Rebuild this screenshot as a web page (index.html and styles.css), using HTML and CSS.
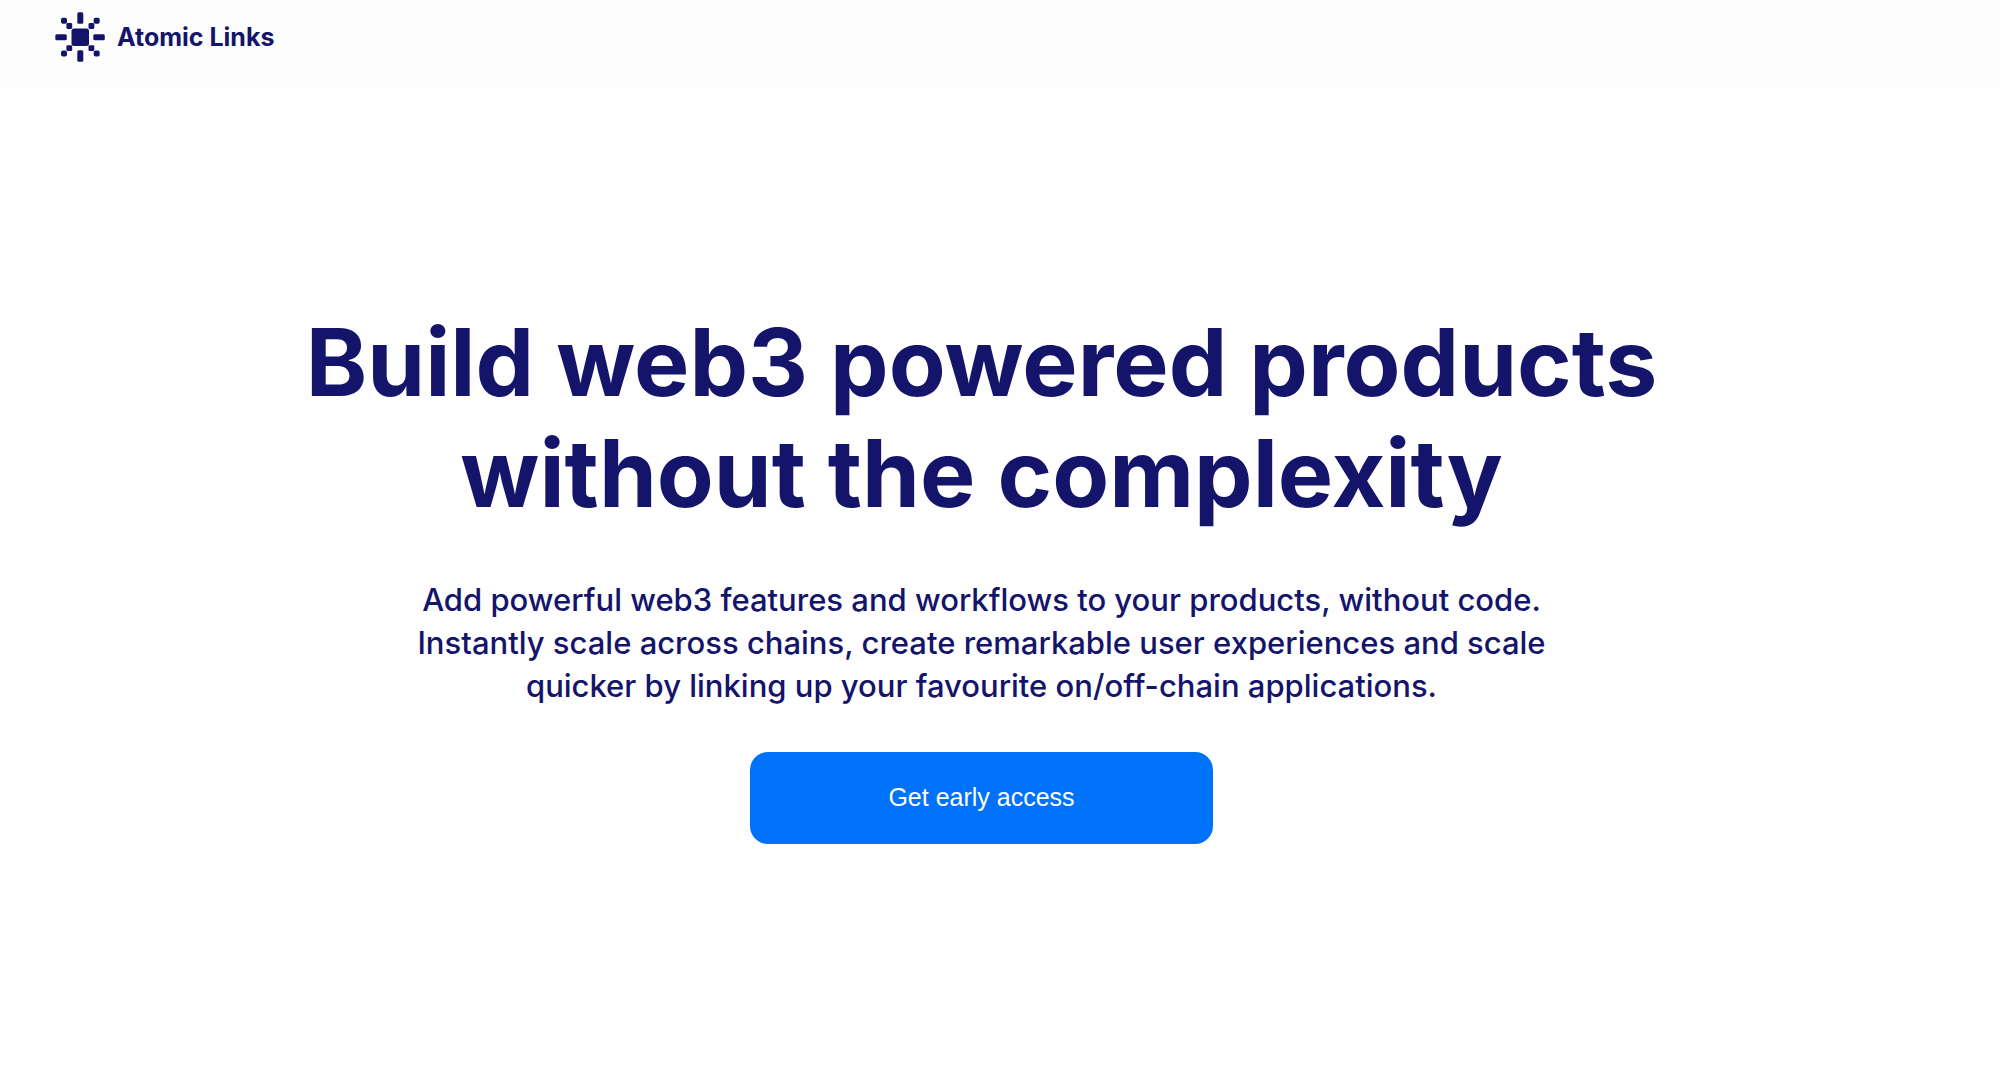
FILE: index.html
```html
<!DOCTYPE html>
<html lang="en">
<head>
<meta charset="utf-8">
<meta name="viewport" content="width=device-width, initial-scale=1">
<title>Atomic Links</title>
<link rel="stylesheet" href="styles.css">
</head>
<body>
<header class="site-header">
  <a class="brand" href="#">
    <svg class="brand-mark" viewBox="0 0 50 50" fill="currentColor" aria-hidden="true">
      <rect x="16.500" y="16.500" width="17.500" height="17.500" rx="2.500"/>
      <rect x="22.300" y="0.300" width="6" height="11.500" rx="1.500"/>
      <rect x="22.300" y="38.300" width="6" height="11.500" rx="1.500"/>
      <rect x="0.300" y="22.200" width="11.500" height="6" rx="1.500"/>
      <rect x="38.300" y="22.200" width="11.500" height="6" rx="1.500"/>
      <rect x="6" y="5.700" width="6" height="6" rx="1.800"/>
      <rect x="11.400" y="11.100" width="5.800" height="5.800" rx="1.300"/>
      <rect x="38.700" y="5.700" width="6" height="6" rx="1.800"/>
      <rect x="33.500" y="11.100" width="5.800" height="5.800" rx="1.300"/>
      <rect x="6" y="38.600" width="6" height="6" rx="1.800"/>
      <rect x="11.400" y="33.300" width="5.800" height="5.800" rx="1.300"/>
      <rect x="38.700" y="38.600" width="6" height="6" rx="1.800"/>
      <rect x="33.500" y="33.300" width="5.800" height="5.800" rx="1.300"/>
    </svg>
    <span>Atomic Links</span>
  </a>
</header>
<main class="hero">
  <h1 class="hero-title">Build web3 powered products without the complexity</h1>
  <p class="hero-text">Add powerful web3 features and workflows to your products, without code. Instantly scale across chains, create remarkable user experiences and scale quicker by linking up your favourite on/off-chain applications.</p>
  <button class="cta" type="button">Get early access</button>
</main>
</body>
</html>
```
FILE: styles.css
```css
* {
  box-sizing: border-box;
}

body {
  display: flex;
  flex-direction: column;
  min-height: 100vh;
  margin: 0;
  background: #fefefe;
  color: #14146b;
  font-family: Inter, "Liberation Sans", sans-serif;
}

.site-header {
  display: flex;
  padding: 12px 55px 19px;
  background: #fdfdfd;
}

.brand {
  display: flex;
  align-items: center;
  gap: 12px;
  color: inherit;
  font-size: 25px;
  font-weight: 700;
  line-height: 48px;
  text-decoration: none;
}

.brand-mark {
  width: 50px;
  height: 50px;
}

.hero {
  display: flex;
  flex: 1;
  flex-direction: column;
  align-items: center;
  justify-content: center;
  padding: 0 37px 2px 0;
  text-align: center;
}

.hero-title {
  max-width: 1440px;
  margin: 0 0 49px;
  font-size: 93px;
  font-weight: 700;
  line-height: 111px;
}

.hero-text {
  max-width: 1150px;
  margin: 0 0 45px;
  font-size: 31px;
  font-weight: 500;
  line-height: 43px;
}

.cta {
  width: 463px;
  max-width: 100%;
  height: 92px;
  border: 0;
  border-radius: 18px;
  background: #0072f9;
  color: #fff;
  font-family: "Liberation Sans", Arial, sans-serif;
  font-size: 25px;
  cursor: pointer;
}
```
